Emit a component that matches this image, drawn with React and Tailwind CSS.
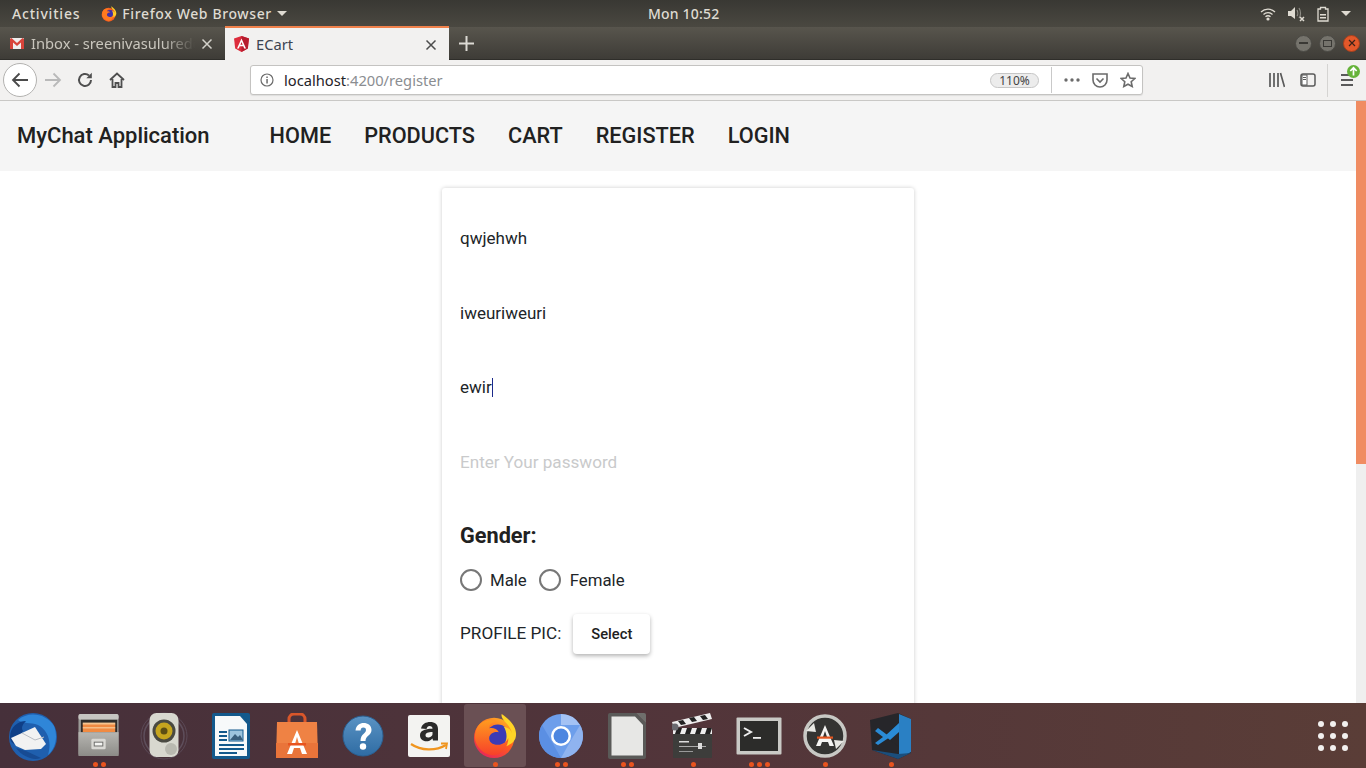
import React from "react";

const Dots = ({ n }) => (
  <div className="absolute bottom-[1px] left-0 right-0 flex justify-center gap-[3px]">
    {Array.from({ length: n }).map((_, i) => (
      <span key={i} className="w-[5px] h-[5px] rounded-full bg-[#e9541f]" />
    ))}
  </div>
);

const Thunderbird = () => (
  <svg width="50" height="50" viewBox="0 0 50 50">
    <circle cx="25" cy="25" r="24" fill="#1f5fae" />
    <path d="M10 8C20 -1 38 1 46 14C50 24 48 36 40 43C44 30 40 18 30 13C22 10 15 12 10 8Z" fill="#2f86d8" />
    <path d="M2 25C2 15 10 9 18 9C14 13 13 16 15 19L6 32C3 30 2 28 2 25Z" fill="#0f3f87" />
    <path d="M3 26L27 15L38 32L33 37L17 38L8 34Z" fill="#f2f2f2" />
    <path d="M14 21L27 28L36 25" fill="none" stroke="#b9bdc4" strokeWidth="1" />
    <path d="M8 36C14 44 24 49 33 46L18 39Z" fill="#174b93" />
  </svg>
);

const Files = () => (
  <svg width="42" height="44" viewBox="0 0 44 46">
    <defs>
      <linearGradient id="fg" x1="0" y1="0" x2="0" y2="1">
        <stop offset="0" stopColor="#b7b6b2" />
        <stop offset="1" stopColor="#8c8b87" />
      </linearGradient>
    </defs>
    <rect x="0.5" y="1" width="42" height="44" rx="2" fill="#9b9b98" />
    <rect x="0.5" y="1" width="42" height="6" rx="2" fill="#c6c5c1" />
    <rect x="3" y="7" width="38" height="14" fill="#2f2d2b" />
    <rect x="5" y="11" width="34" height="9" fill="#f08a42" />
    <rect x="5" y="10" width="34" height="2" fill="#f6c48f" />
    <rect x="5" y="15" width="34" height="1" fill="#f9d9ae" />
    <rect x="0.5" y="20" width="42" height="25" fill="url(#fg)" />
    <rect x="14" y="27" width="15" height="11" rx="1.5" fill="#dad9d5" />
    <rect x="17" y="30.5" width="9" height="4" fill="#f4f4f2" stroke="#6b6b68" strokeWidth="1" />
  </svg>
);

const Rhythmbox = () => (
  <svg width="50" height="50" viewBox="0 0 50 50">
    <circle cx="25" cy="25" r="23" fill="none" stroke="#5b4a57" strokeWidth="1" />
    <circle cx="25" cy="25" r="20" fill="none" stroke="#5e4e5b" strokeWidth="1.5" />
    <rect x="10.5" y="2" width="29" height="44" rx="7" fill="#d8d8cf" />
    <circle cx="25" cy="20" r="11.5" fill="#4a4a42" />
    <circle cx="25" cy="20" r="8.5" fill="#c6a51e" />
    <circle cx="25" cy="20" r="3.5" fill="#5c4e14" />
    <circle cx="32" cy="38" r="6" fill="#b9b9b0" />
  </svg>
);

const Writer = () => (
  <svg width="40" height="48" viewBox="0 0 40 48">
    <path d="M1 3a2 2 0 0 1 2-2h27l9 10v34a2 2 0 0 1-2 2H3a2 2 0 0 1-2-2Z" fill="#13598c" />
    <path d="M4 4h25l7 8v32H4Z" fill="#f7f9fa" />
    <path d="M29 1h8a2 2 0 0 1 2 2v8Z" fill="#13598c" />
    <rect x="8" y="19" width="8" height="2" fill="#13598c" />
    <rect x="8" y="23" width="8" height="2" fill="#13598c" />
    <rect x="8" y="27" width="8" height="2" fill="#13598c" />
    <rect x="18" y="18" width="14" height="11" fill="#9dc4dd" stroke="#13598c" />
    <path d="M19 28l5-6 3 3 2-2 3 5Z" fill="#3a5f7c" />
    <rect x="8" y="32" width="25" height="2" fill="#13598c" />
    <rect x="8" y="36" width="25" height="2" fill="#13598c" />
    <rect x="8" y="40" width="18" height="2" fill="#13598c" />
  </svg>
);

const Software = () => (
  <svg width="44" height="46" viewBox="0 0 44 46">
    <path d="M14 10V6a5 5 0 0 1 5-5h6a5 5 0 0 1 5 5v4" fill="none" stroke="#d9562a" strokeWidth="3" />
    <path d="M2 9h40l1 36H1Z" fill="#ef8244" />
    <path d="M1 30L43 30V45H1Z" fill="#e9743a" />
    <path d="M22 17L12 41h5l2-6h6l2 6h5Z" fill="#fff" />
    <path d="M22 24l-2 7h4Z" fill="#ef8244" />
    <rect x="13" y="30" width="18" height="2.5" fill="#e8531f" />
  </svg>
);

const Help = () => (
  <svg width="42" height="42" viewBox="0 0 42 42">
    <defs>
      <linearGradient id="hg" x1="0" y1="0" x2="0" y2="1">
        <stop offset="0" stopColor="#5a93c4" />
        <stop offset="1" stopColor="#2f6ca3" />
      </linearGradient>
    </defs>
    <circle cx="21" cy="21" r="20" fill="url(#hg)" stroke="#2a5f90" />
    <path d="M13.5 15.5C14 10 18 8 21.5 8C26 8 29.5 10.5 29.5 15C29.5 20.5 23.5 20.5 23.5 26H18.5C18.5 19 24 18.5 24 15C24 13.3 23 12.5 21.3 12.5C19.5 12.5 18.8 13.8 18.6 15.5Z" fill="#fff" />
    <circle cx="21" cy="31.5" r="3.2" fill="#fff" />
  </svg>
);

const Amazon = () => (
  <svg width="42" height="42" viewBox="0 0 42 42">
    <rect x="0" y="0" width="42" height="42" rx="2" fill="#f3f3f1" />
    <path d="M13 13.5C14 9 18 7 22 7C27 7 30 9.5 30 14V25.5H25L24.5 23.5C22.5 25.5 20.5 26.300 18.500 26.300C14.500 26.300 12 23.500 12 20.500C12 16 16 13.800 24.500 13.800C24.500 12 23.500 11 21.500 11C20 11 19 12 18.500 14Z" fill="#2a2a2a" />
    <path d="M24.500 17C20 17 17.500 18 17.500 20.300C17.500 21.800 18.500 22.500 20 22.500C22 22.500 24.500 21 24.500 19Z" fill="#f3f3f1" />
    <path d="M3 29C13 36 28 36 38 30" fill="none" stroke="#f0951f" strokeWidth="2.200" />
    <path d="M33 28.500L39 28.500L38 34" fill="none" stroke="#f0951f" strokeWidth="1.800" />
  </svg>
);

const FirefoxBig = ({ s = 46 }) => (
  <svg width={s} height={s} viewBox="0 0 48 48">
    <defs>
      <linearGradient id="ff1" x1="0.2" y1="1" x2="0.8" y2="0">
        <stop offset="0" stopColor="#e3235f" />
        <stop offset="0.5" stopColor="#ff5a1f" />
        <stop offset="1" stopColor="#ffb326" />
      </linearGradient>
      <linearGradient id="ff2" x1="0" y1="0" x2="0" y2="1">
        <stop offset="0" stopColor="#ff9a1f" />
        <stop offset="1" stopColor="#f7402a" />
      </linearGradient>
    </defs>
    <circle cx="23" cy="26" r="21" fill="url(#ff1)" />
    <circle cx="27" cy="24" r="12" fill="#3b3bb5" />
    <path d="M31 1C29 8 42 12 42 24C42 17 37 15 33 14C37 20 38 30 30 37C34 34 46 34 46 22C46 13 38 6 31 1Z" fill="#ffd426" />
    <path d="M6 14C10 8 18 6 25 9C20 10 17 13 18 16C21 15 26 16 28 20C24 19 19 21 18 25C17 31 23 34 29 33C33 32 36 30 38 26C38 36 30 45 21 44C11 43 3 34 3 25C3 21 4 17 6 14Z" fill="url(#ff2)" />
  </svg>
);

const FirefoxSmall = () => (
  <svg width="16" height="16" viewBox="0 0 48 48">
    <circle cx="23" cy="26" r="21" fill="#f25b21" />
    <circle cx="27" cy="24" r="12" fill="#3d2fa8" />
    <path d="M31 1C29 8 42 12 42 24C42 17 37 15 33 14C37 20 38 30 30 37C34 34 46 34 46 22C46 13 38 6 31 1Z" fill="#ffcb26" />
    <path d="M6 14C10 8 18 6 25 9C20 10 17 13 18 16C21 15 26 16 28 20C24 19 19 21 18 25C17 31 23 34 29 33C33 32 36 30 38 26C38 36 30 45 21 44C11 43 3 34 3 25C3 21 4 17 6 14Z" fill="#ff7a1f" />
  </svg>
);

const Chromium = () => (
  <svg width="44" height="44" viewBox="0 0 44 44">
    <circle cx="22" cy="22" r="22" fill="#6d9eeb" />
    <path d="M22 0A22 22 0 0 1 41 11H22Z" fill="#a4c2f4" />
    <path d="M41 11A22 22 0 0 1 22 44L31 28Z" fill="#8fb3ef" />
    <path d="M3 11L13 28L22 44A22 22 0 0 1 3 11Z" fill="#5b8fe3" />
    <circle cx="22" cy="22" r="10" fill="#fff" />
    <circle cx="22" cy="22" r="7.500" fill="#4d86e0" />
  </svg>
);

const Libre = () => (
  <svg width="40" height="48" viewBox="0 0 40 48">
    <path d="M1 3a2 2 0 0 1 2-2h26l10 10v34a2 2 0 0 1-2 2H3a2 2 0 0 1-2-2Z" fill="#5a5a58" />
    <path d="M4.500 4.500h23.500l8 8.500v30.500H4.500Z" fill="#e7e7e5" />
    <path d="M29 1h8a2 2 0 0 1 2 2v8Z" fill="#6f6f6c" />
  </svg>
);

const Clapper = () => (
  <svg width="42" height="46" viewBox="0 0 42 46">
    <rect x="1" y="18" width="39" height="27" rx="1" fill="#3d3d3b" />
    <rect x="1" y="15" width="39" height="6" fill="#eee" />
    <path d="M5 15h5l-2 6H3ZM15 15h5l-2 6h-5ZM25 15h5l-2 6h-5ZM35 15h5l-2 6h-5Z" fill="#222" />
    <path d="M0 9L38 0l2 6L2 15Z" fill="#eee" />
    <path d="M6 8l5-1 3 4-5 1ZM17 5l5-1 3 4-5 1ZM28 3l5-1 3 4-5 1Z" fill="#222" />
    <circle cx="3" cy="14" r="3.500" fill="#6a6a70" />
    <rect x="7" y="28" width="10" height="1.500" fill="#ddd" />
    <rect x="7" y="33" width="27" height="1" fill="#aaa" />
    <rect x="7" y="38" width="14" height="1" fill="#999" />
    <rect x="26" y="30" width="4" height="6" fill="#ddd" />
  </svg>
);

const Terminal = () => (
  <svg width="46" height="38" viewBox="0 0 46 38">
    <rect x="0.500" y="0.500" width="45" height="37" rx="1" fill="#c9c9c5" />
    <rect x="4" y="4" width="38" height="30" fill="#2c2c2a" />
    <path d="M8 11l7 4-7 4" fill="none" stroke="#eee" strokeWidth="2" />
    <rect x="17" y="20" width="8" height="1.800" fill="#eee" />
  </svg>
);

const Updater = () => (
  <svg width="44" height="46" viewBox="0 0 44 46">
    <circle cx="22" cy="23" r="20" fill="#343432" stroke="#c8c8c4" strokeWidth="3.500" />
    <path d="M3 18L11 10L13 19Z" fill="#e8e8e4" />
    <path d="M41 28L33 36L31 27Z" fill="#e8e8e4" />
    <path d="M22 12L13 33h4.500l1.500-4h6l1.500 4H31Z" fill="#f4f4f2" />
    <path d="M22 18l-2 6h4Z" fill="#343432" />
    <rect x="14" y="23.500" width="16" height="2.200" fill="#e2551f" />
  </svg>
);

const VSCode = () => (
  <svg width="42" height="48" viewBox="0 0 42 48">
    <path d="M0 8L28 1L41 7V41L28 47L2 38Z" fill="#26262a" />
    <path d="M29 2L41 7V40L29 46Z" fill="#2a80c4" />
    <path d="M29 11V35L15 24Z" fill="#26262a" />
    <path d="M8 16L20 25L8 33L5 31L13 25L5 19Z" fill="#2a8bd6" />
    <path d="M29 11L15 24L20 28L29 20Z" fill="#2a8bd6" />
    <path d="M2 38L28 47L41 41L28 42Z" fill="#1b4e7c" />
  </svg>
);

const Dock = () => (
  <div className="h-[65px] shrink-0 flex items-stretch bg-gradient-to-r from-[#46303a] via-[#52353a] to-[#5a3d37] relative">
    <div className="w-[66px] relative flex items-center justify-center"><div className="pt-[2px]"><Thunderbird /></div></div>
    <div className="w-[66px] relative flex items-center justify-center"><div className="pb-[1px]"><Files /></div><Dots n={2} /></div>
    <div className="w-[66px] relative flex items-center justify-center"><div className="pr-[2px]"><Rhythmbox /></div></div>
    <div className="w-[66px] relative flex items-center justify-center"><Writer /></div>
    <div className="w-[66px] relative flex items-center justify-center"><Software /></div>
    <div className="w-[66px] relative flex items-center justify-center"><Help /></div>
    <div className="w-[66px] relative flex items-center justify-center"><Amazon /></div>
    <div className="w-[66px] relative flex items-center justify-center">
      <div className="absolute left-[2px] right-[2px] top-[1px] bottom-[1px] rounded-[3px] bg-[#6a5054]" />
      <div className="relative"><FirefoxBig /></div>
      <Dots n={1} />
    </div>
    <div className="w-[66px] relative flex items-center justify-center"><Chromium /><Dots n={2} /></div>
    <div className="w-[66px] relative flex items-center justify-center"><Libre /><Dots n={2} /></div>
    <div className="w-[66px] relative flex items-center justify-center"><Clapper /><Dots n={1} /></div>
    <div className="w-[66px] relative flex items-center justify-center"><Terminal /><Dots n={3} /></div>
    <div className="w-[66px] relative flex items-center justify-center"><Updater /><Dots n={1} /></div>
    <div className="w-[66px] relative flex items-center justify-center"><VSCode /><Dots n={1} /></div>
    <div className="ml-auto mr-[18px] self-center grid grid-cols-3 gap-[6px]">
      {Array.from({ length: 9 }).map((_, i) => (
        <span key={i} className="w-[6px] h-[6px] rounded-full bg-[#f2f0ee]" />
      ))}
    </div>
  </div>
);

const TopBar = () => (
  <div className="h-[27px] shrink-0 flex items-center bg-gradient-to-b from-[#393833] to-[#4a4841] text-[#dfdbd2] text-[14px] font-medium font-['Noto_Sans','Open_Sans',sans-serif] relative">
    <span className="ml-[12px] tracking-[0.8px]">Activities</span>
    <span className="ml-[21px]"><FirefoxSmall /></span>
    <span className="ml-[5px] tracking-[0.62px]">Firefox Web Browser</span>
    <span className="ml-[5px] w-0 h-0 border-l-[5px] border-r-[5px] border-t-[5px] border-l-transparent border-r-transparent border-t-[#dfdbd2]" />
    <span className="absolute left-[648px] tracking-[0.2px]">Mon 10:52</span>
    <div className="ml-auto flex items-center mr-[15px]">
      <svg width="16" height="14" viewBox="0 0 16 14" className="mr-[11px]">
        <path d="M1 5a10 10 0 0 1 14 0M3.500 7.500a6.500 6.500 0 0 1 9 0M5.500 9.800a3.500 3.500 0 0 1 5 0" fill="none" stroke="#dfdbd2" strokeWidth="1.300" />
        <circle cx="8" cy="12" r="1.600" fill="#dfdbd2" />
      </svg>
      <svg width="18" height="16" viewBox="0 0 18 16" className="mr-[12px]">
        <path d="M1 5h3l4-4v12L4 10H1Z" fill="#dfdbd2" />
        <path d="M10 4c1 2 1 5 0 6M12 2c2 3 2 8 0 10" fill="none" stroke="#8f8d86" strokeWidth="1.200" />
        <path d="M13 11l4 4M17 11l-4 4" stroke="#dfdbd2" strokeWidth="1.500" />
      </svg>
      <svg width="12" height="16" viewBox="0 0 12 16" className="mr-[12px]">
        <path d="M3.500 1.500h5v1.500H11V15H1V3h2.500Z" fill="none" stroke="#dfdbd2" strokeWidth="1.300" />
        <rect x="3" y="8" width="6" height="1.500" fill="#dfdbd2" />
        <rect x="3" y="11" width="6" height="1.500" fill="#dfdbd2" />
      </svg>
      <span className="w-0 h-0 border-l-[5px] border-r-[5px] border-t-[5px] border-l-transparent border-r-transparent border-t-[#dfdbd2]" />
    </div>
  </div>
);

const X = ({ c }) => (
  <svg width="12" height="12" viewBox="0 0 12 12">
    <path d="M1.500 1.500l9 9M10.500 1.500l-9 9" stroke={c} strokeWidth="1.500" />
  </svg>
);

const TabBar = () => (
  <div className="h-[33px] shrink-0 flex items-stretch bg-gradient-to-b from-[#58554d] to-[#3e3c37] border-b border-[#2f2e2a] font-['Noto_Sans',sans-serif] text-[14.700px]">
    <div className="w-[225px] flex items-center pl-[10px] relative text-[#c9c6bd]">
      <svg width="14" height="11" viewBox="0 0 14 11">
        <rect width="14" height="11" rx="1" fill="#eee" />
        <path d="M0 1v10h3V4.500L7 8l4-3.500V11h3V1L12.500 0 7 5 1.500 0Z" fill="#d8443a" />
      </svg>
      <span className="ml-[7px] whitespace-nowrap overflow-hidden w-[164px] [mask-image:linear-gradient(to_right,black_80%,transparent)]">Inbox - sreenivasuluredd</span>
      <span className="absolute right-[12px] top-[11px]"><X c="#d3d1ca" /></span>
    </div>
    <div className="w-[224px] bg-[#f2f1f0] border-t-[2px] border-[#f0814b] flex items-center pl-[9px] relative -mt-[1px] -mb-[1px]">
      <svg width="15" height="16" viewBox="0 0 15 16">
        <path d="M7.500 0L15 2.600l-1.200 9.800L7.500 16l-6.300-3.600L0 2.600Z" fill="#dd2c3c" />
        <path d="M7.500 0L15 2.600l-1.200 9.800L7.500 16Z" fill="#b71c2e" />
        <path d="M7.500 2.500L3 12.500h1.800l.9-2.200h3.600l.9 2.200H12ZM6.400 8.800L7.500 6l1.100 2.800Z" fill="#fff" />
      </svg>
      <span className="ml-[7px] text-[#3d4450]">ECart</span>
      <span className="absolute right-[12px] top-[11px]"><X c="#4c4c4c" /></span>
    </div>
    <div className="w-[34px] flex items-center justify-center">
      <svg width="15" height="15" viewBox="0 0 15 15"><path d="M7.500 0v15M0 7.500h15" stroke="#dcdad4" strokeWidth="2" /></svg>
    </div>
    <div className="ml-auto flex items-center gap-[7px] mr-[6px]">
      <div className="w-[17px] h-[17px] rounded-full bg-[#75736c] border border-[#4b4a45] flex items-center justify-center"><div className="w-[9px] h-[1.500px] bg-[#3a3935]" /></div>
      <div className="w-[17px] h-[17px] rounded-full bg-[#75736c] border border-[#4b4a45] flex items-center justify-center"><div className="w-[9px] h-[7px] border border-[#3a3935]" /></div>
      <div className="w-[17px] h-[17px] rounded-full bg-[#e2582a] border border-[#a93f1c] flex items-center justify-center">
        <svg width="8" height="8" viewBox="0 0 8 8"><path d="M1 1l6 6M7 1l-6 6" stroke="#3a2118" strokeWidth="1.200" /></svg>
      </div>
    </div>
  </div>
);

const Toolbar = () => (
  <div className="h-[41px] shrink-0 bg-[#f2f1f0] border-b border-[#c9c8c6] flex items-center relative font-['Noto_Sans',sans-serif]">
    <div className="ml-[3px] w-[34px] h-[34px] rounded-full bg-white border border-[#b3b2b0] flex items-center justify-center">
      <svg width="18" height="16" viewBox="0 0 18 16"><path d="M17 8H2M8.500 1.500L2 8l6.500 6.500" fill="none" stroke="#4a4a4a" strokeWidth="1.800" /></svg>
    </div>
    <svg width="18" height="16" viewBox="0 0 18 16" className="ml-[7px]"><path d="M1 8h15M9.500 1.500L16 8l-6.500 6.500" fill="none" stroke="#b9b9b9" strokeWidth="1.800" /></svg>
    <svg width="16" height="16" viewBox="0 0 16 16" className="ml-[15px]"><path d="M14 8a6 6 0 1 1-2-4.500" fill="none" stroke="#4f4f4f" strokeWidth="2" /><path d="M14.800 0.800v5.500H9.300Z" fill="#4f4f4f" /></svg>
    <svg width="16" height="16" viewBox="0 0 16 16" className="ml-[16px]"><path d="M1 8l7-6.500L15 8M3.500 7v8h3v-4h3v4h3V7" fill="none" stroke="#4f4f4f" strokeWidth="1.800" /></svg>
    <div className="ml-[125px] w-[893px] h-[30px] bg-white border border-[#c4c3c1] rounded-[3px] flex items-center text-[14.700px] shadow-[0_1px_1px_rgba(0,0,0,0.08)]">
      <svg width="14" height="14" viewBox="0 0 14 14" className="ml-[9px]">
        <circle cx="7" cy="7" r="6" fill="none" stroke="#6b6b6b" strokeWidth="1.200" />
        <rect x="6.300" y="6" width="1.500" height="4.500" fill="#6b6b6b" />
        <rect x="6.300" y="3.500" width="1.500" height="1.500" fill="#6b6b6b" />
      </svg>
      <span className="ml-[10px] pt-[1px] text-[#1f2329]">localhost<span className="text-[#8a8d91]">:4200/register</span></span>
      <div className="ml-auto flex items-center">
        <span className="w-[49px] h-[15px] rounded-full bg-[#ececec] border border-[#c6c6c6] text-[12px] leading-[13px] text-center text-[#444]">110%</span>
        <span className="w-px h-[26px] bg-[#c9c9c9] ml-[12px]" />
        <svg width="16" height="4" viewBox="0 0 16 4" className="ml-[12px]"><circle cx="2" cy="2" r="1.700" fill="#6b6b6b" /><circle cx="8" cy="2" r="1.700" fill="#6b6b6b" /><circle cx="14" cy="2" r="1.700" fill="#6b6b6b" /></svg>
        <svg width="16" height="15" viewBox="0 0 16 15" className="ml-[12px]"><path d="M1 1h14v6a7 7 0 0 1-14 0Z" fill="none" stroke="#6b6b6b" strokeWidth="1.600" /><path d="M4.500 5.500L8 9l3.500-3.500" fill="none" stroke="#6b6b6b" strokeWidth="1.600" /></svg>
        <svg width="16" height="16" viewBox="0 0 16 16" className="ml-[12px] mr-[6px]"><path d="M8 1.500l2 4.500 4.800.5-3.600 3.200 1 4.800L8 12.200l-4.200 2.300 1-4.800L1.200 6.500 6 6Z" fill="none" stroke="#6b6b6b" strokeWidth="1.600" /></svg>
      </div>
    </div>
    <svg width="16" height="16" viewBox="0 0 16 16" className="ml-[126px]"><path d="M1 1v14M5 1v14M9 1v14M11.500 1L15.500 15" stroke="#5a5a5a" strokeWidth="1.700" fill="none" /></svg>
    <svg width="16" height="14" viewBox="0 0 16 14" className="ml-[15px]"><rect x="1" y="1" width="14" height="12" rx="2" fill="none" stroke="#5a5a5a" strokeWidth="1.500" /><rect x="2" y="2" width="5" height="10" fill="#fff" stroke="#5a5a5a" /><path d="M3 4.500h3M3 6.500h3" stroke="#5a5a5a" /></svg>
    <span className="w-px h-[33px] bg-[#d5d4d2] ml-[11px]" />
    <div className="relative ml-[13px] w-[12px] h-[12px] flex flex-col justify-between">
      <span className="h-[2px] bg-[#5a5a5a]" />
      <span className="h-[2px] bg-[#5a5a5a]" />
      <span className="h-[2px] bg-[#5a5a5a]" />
      <svg width="13" height="13" viewBox="0 0 13 13" className="absolute -top-[9px] left-[6px]">
        <circle cx="6.500" cy="6.500" r="6.500" fill="#66b33a" />
        <path d="M6.500 10.500V3M3.300 6l3.200-3.200L9.700 6" fill="none" stroke="#fff" strokeWidth="1.700" />
      </svg>
    </div>
  </div>
);

const Field = ({ children, muted, caret }) => (
  <div className="h-[74.670px] flex items-center">
    <span className={muted ? "text-[17.100px] text-[#c9cacb]" : "text-[17px] text-[#212529]"}>{children}</span>
    {caret && <span className="w-px h-[19px] bg-[#1c2a8a]" />}
  </div>
);

export default function App() {
  return (
    <div className="w-[1366px] h-[768px] overflow-hidden flex flex-col bg-white">
      <TopBar />
      <TabBar />
      <Toolbar />
      <div className="flex-1 min-h-0 flex font-['Roboto',sans-serif] text-[#212529]">
        <div className="flex-1 min-w-0 overflow-hidden">
          <nav className="h-[70px] bg-[#f5f5f5] flex items-center">
            <span className="ml-[17px] pb-[2px] text-[22px] font-medium text-[#212121]">MyChat Application</span>
            <div className="ml-[60px] flex gap-[33px] text-[21.700px] font-medium text-[#212121]">
              <span>HOME</span>
              <span>PRODUCTS</span>
              <span>CART</span>
              <span>REGISTER</span>
              <span>LOGIN</span>
            </div>
          </nav>
          <div className="ml-[442px] mt-[17px] w-[472px] h-[560px] rounded-[3px] shadow-[0_0_4px_rgba(0,0,0,0.2)] px-[18px] pt-[13.300px]">
            <Field>qwjehwh</Field>
            <Field>iweuriweuri</Field>
            <Field caret>ewir</Field>
            <Field muted>Enter Your password</Field>
            <div className="mt-[22.700px] text-[21.700px] font-bold leading-[26px] text-[#212121]">Gender:</div>
            <div className="mt-[19px] flex items-center text-[16.800px]">
              <span className="w-[22px] h-[22px] rounded-full border-[2px] border-[#777777]" />
              <span className="ml-[8px]">Male</span>
              <span className="ml-[12px] w-[22px] h-[22px] rounded-full border-[2px] border-[#777777]" />
              <span className="ml-[9px]">Female</span>
            </div>
            <div className="mt-[21px] flex items-center text-[17.150px]">
              <span>PROFILE PIC:</span>
              <span className="ml-[12px] w-[77px] h-[40px] rounded-[4px] bg-white shadow-[0_2px_4px_rgba(0,0,0,0.3)] flex items-center justify-center text-[14.700px] font-medium text-[#212121]">Select</span>
            </div>
          </div>
        </div>
        <div className="w-[10px] shrink-0 bg-[#efefef] flex flex-col">
          <div className="h-[363px] bg-[#f08c62]" />
        </div>
      </div>
      <Dock />
    </div>
  );
}
